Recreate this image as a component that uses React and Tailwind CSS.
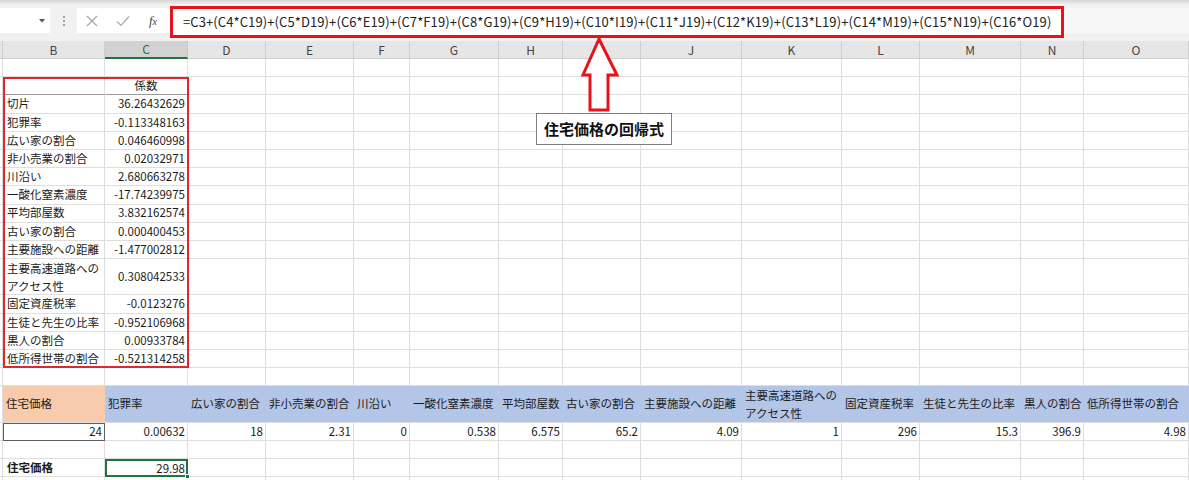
import React from "react";

const COLS = [
  { l: "", w: "w-[3px]" },
  { l: "B", w: "w-[102px]" },
  { l: "C", w: "w-[83px]" },
  { l: "D", w: "w-[78px]" },
  { l: "E", w: "w-[88px]" },
  { l: "F", w: "w-[56px]" },
  { l: "G", w: "w-[89px]" },
  { l: "H", w: "w-[64px]" },
  { l: "I", w: "w-[78px]" },
  { l: "J", w: "w-[101px]" },
  { l: "K", w: "w-[100px]" },
  { l: "L", w: "w-[78px]" },
  { l: "M", w: "w-[101px]" },
  { l: "N", w: "w-[63px]" },
  { l: "O", w: "w-[105px]" },
];

const COEF = [
  ["切片", "36.26432629"],
  ["犯罪率", "-0.113348163"],
  ["広い家の割合", "0.046460998"],
  ["非小売業の割合", "0.02032971"],
  ["川沿い", "2.680663278"],
  ["一酸化窒素濃度", "-17.74239975"],
  ["平均部屋数", "3.832162574"],
  ["古い家の割合", "0.000400453"],
  ["主要施設への距離", "-1.477002812"],
  [["主要高速道路への", "アクセス性"], "0.308042533"],
  ["固定資産税率", "-0.0123276"],
  ["生徒と先生の比率", "-0.952106968"],
  ["黒人の割合", "0.00933784"],
  ["低所得世帯の割合", "-0.521314258"],
];

const HEAD = [
  "住宅価格",
  "犯罪率",
  "広い家の割合",
  "非小売業の割合",
  "川沿い",
  "一酸化窒素濃度",
  "平均部屋数",
  "古い家の割合",
  "主要施設への距離",
  ["主要高速道路への", "アクセス性"],
  "固定資産税率",
  "生徒と先生の比率",
  "黒人の割合",
  "低所得世帯の割合",
];

const VALS = ["24", "0.00632", "18", "2.31", "0", "0.538", "6.575", "65.2", "4.09", "1", "296", "15.3", "396.9", "4.98"];

const GRID = "border-r border-b border-[#dedede]";

function Label({ v }) {
  if (Array.isArray(v)) {
    return (
      <div className="flex flex-col leading-[18.2px]">
        <span>{v[0]}</span>
        <span>{v[1]}</span>
      </div>
    );
  }
  return <span className="whitespace-nowrap">{v}</span>;
}

function EmptyRow({ h = "h-[18.2px]" }) {
  return (
    <div className={`flex ${h}`}>
      {COLS.map((c, i) => (
        <div key={i} className={`${c.w} shrink-0 ${GRID}`} />
      ))}
    </div>
  );
}

function CoefRow({ label, value, tall }) {
  const h = tall ? "h-[36.4px]" : "h-[18.2px]";
  return (
    <div className={`flex ${h}`}>
      {COLS.map((c, i) => {
        if (i === 1)
          return (
            <div key={i} className={`${c.w} shrink-0 ${GRID} flex items-center pl-[4px]`}>
              <Label v={label} />
            </div>
          );
        if (i === 2)
          return (
            <div key={i} className={`${c.w} shrink-0 ${GRID} flex items-center justify-end pr-[2px]`}>
              {value}
            </div>
          );
        return <div key={i} className={`${c.w} shrink-0 ${GRID}`} />;
      })}
    </div>
  );
}

function XIcon() {
  return (
    <svg width="12" height="12" viewBox="0 0 12 12">
      <path d="M1 1 L11 11 M11 1 L1 11" stroke="#a8a8a8" strokeWidth="1.2" fill="none" />
    </svg>
  );
}

function CheckIcon() {
  return (
    <svg width="14" height="12" viewBox="0 0 14 12">
      <path d="M1 6.5 L5 10.5 L13 1.5" stroke="#a8a8a8" strokeWidth="1.2" fill="none" />
    </svg>
  );
}

export default function App() {
  return (
    <div className="relative w-[1189px] h-[480px] overflow-hidden bg-white text-[11.5px] text-[#1b1b1b] font-['Noto_Sans_CJK_JP','Noto_Sans',sans-serif]">
      {/* Toolbar */}
      <div className="h-[41px] bg-[#f1f1f1] flex flex-col">
        <div className="h-[4px] bg-gradient-to-b from-[#d6d6d6] to-[#ececec]" />
        <div className="flex items-center h-[37px]">
          <div className="w-[50px] h-[25px] bg-white flex items-center justify-end pr-[5px] mt-[-4px]">
            <svg width="6" height="4" viewBox="0 0 6 4">
              <path d="M0 0 L6 0 L3 3.5 Z" fill="#555" />
            </svg>
          </div>
          <div className="w-[27px] flex justify-center mt-[-4px]">
            <div className="flex flex-col gap-[2px]">
              <div className="w-[2px] h-[2px] bg-[#a0a0a0]" />
              <div className="w-[2px] h-[2px] bg-[#a0a0a0]" />
              <div className="w-[2px] h-[2px] bg-[#a0a0a0]" />
            </div>
          </div>
          <div className="w-[93px] h-[25px] bg-white flex items-center mt-[-4px]">
            <div className="w-[30px] flex justify-center">
              <XIcon />
            </div>
            <div className="w-[32px] flex justify-center">
              <CheckIcon />
            </div>
            <div className="w-[28px] flex justify-center text-[13px] text-[#444] italic font-['Liberation_Serif',serif]">
              f<span className="text-[10px] mt-[3px]">x</span>
            </div>
          </div>
          <div className="w-[894px] h-[32px] mt-[-1px] bg-white border-[3px] border-[#e5141c] flex items-center pl-[10px] text-[13px] text-[#222] tracking-[0.1px] whitespace-nowrap">
            =C3+(C4*C19)+(C5*D19)+(C6*E19)+(C7*F19)+(C8*G19)+(C9*H19)+(C10*I19)+(C11*J19)+(C12*K19)+(C13*L19)+(C14*M19)+(C15*N19)+(C16*O19)
          </div>
          <div className="flex-1 h-[25px] bg-[#f7f7f7] mt-[-4px]" />
        </div>
      </div>

      {/* Column headers */}
      <div className="flex h-[18px] text-[12px] text-[#444] bg-[#e6e6e6]">
        {COLS.map((c, i) =>
          i === 2 ? (
            <div
              key={i}
              className={`${c.w} shrink-0 flex items-center justify-center bg-[#d2d2d2] border-r border-[#c8c8c8] border-b-2 border-b-[#217346] text-[#217346]`}
            >
              {c.l}
            </div>
          ) : (
            <div key={i} className={`${c.w} shrink-0 flex items-center justify-center border-r border-b border-[#cfcfcf]`}>
              {c.l}
            </div>
          )
        )}
      </div>

      {/* Row 1 */}
      <EmptyRow />

      {/* 係数 header */}
      <div className="flex h-[18.2px]">
        {COLS.map((c, i) => {
          if (i === 1) return <div key={i} className={`${c.w} shrink-0 border-r border-[#dedede] border-b border-b-[#9a9a9a]`} />;
          if (i === 2)
            return (
              <div key={i} className={`${c.w} shrink-0 border-r border-[#dedede] border-b border-b-[#9a9a9a] flex items-center justify-center`}>
                係数
              </div>
            );
          return <div key={i} className={`${c.w} shrink-0 ${GRID}`} />;
        })}
      </div>

      {COEF.map(([l, v], k) => (
        <CoefRow key={k} label={l} value={v} tall={Array.isArray(l)} />
      ))}

      <EmptyRow />

      {/* Blue header row */}
      <div className="flex h-[36.4px]">
        {COLS.map((c, i) => {
          if (i === 0) return <div key={i} className={`${c.w} shrink-0 ${GRID}`} />;
          const bg = i === 1 ? "bg-[#f8cbad]" : "bg-[#b4c6e7]";
          return (
            <div key={i} className={`${c.w} shrink-0 ${bg} flex items-center pl-[3px] border-b border-[#dedede]`}>
              <Label v={HEAD[i - 1]} />
            </div>
          );
        })}
      </div>

      {/* Values row */}
      <div className="flex h-[18.2px]">
        {COLS.map((c, i) => {
          if (i === 0) return <div key={i} className={`${c.w} shrink-0 ${GRID}`} />;
          if (i === 1)
            return (
              <div key={i} className={`${c.w} shrink-0 border border-[#5f5f5f] flex items-center justify-end pr-[2px]`}>
                {VALS[0]}
              </div>
            );
          return (
            <div key={i} className={`${c.w} shrink-0 ${GRID} flex items-center justify-end pr-[2px]`}>
              {VALS[i - 1]}
            </div>
          );
        })}
      </div>

      <EmptyRow />

      {/* Result row */}
      <div className="flex h-[18.2px]">
        {COLS.map((c, i) => {
          if (i === 1)
            return (
              <div key={i} className={`${c.w} shrink-0 ${GRID} flex items-center pl-[4px] font-bold`}>
                住宅価格
              </div>
            );
          if (i === 2)
            return (
              <div key={i} className={`${c.w} shrink-0 relative border-2 border-[#217346] flex items-center justify-end pr-[1px]`}>
                29.98
                <div className="absolute right-[-4px] bottom-[-4px] w-[5px] h-[5px] bg-[#217346] border border-white" />
              </div>
            );
          return <div key={i} className={`${c.w} shrink-0 ${GRID}`} />;
        })}
      </div>
      <EmptyRow />

      {/* Red annotation box around coefficients */}
      <div className="absolute left-[3px] top-[77px] w-[186px] h-[291px] border-2 border-[#e3262e] pointer-events-none" />

      {/* Arrow */}
      <svg className="absolute left-[578px] top-[35px]" width="44" height="80" viewBox="0 0 44 80">
        <path
          d="M21 4 L39 40 L30 40 L30 75 L12 75 L12 40 L5 40 Z"
          fill="white"
          stroke="#e5141c"
          strokeWidth="3"
          strokeLinejoin="miter"
        />
      </svg>

      {/* Label */}
      <div className="absolute left-[536px] top-[113px] w-[136px] h-[32px] bg-white border border-[#7f7f7f] flex items-center justify-center text-[15px] font-semibold text-[#111]">
        住宅価格の回帰式
      </div>
    </div>
  );
}
